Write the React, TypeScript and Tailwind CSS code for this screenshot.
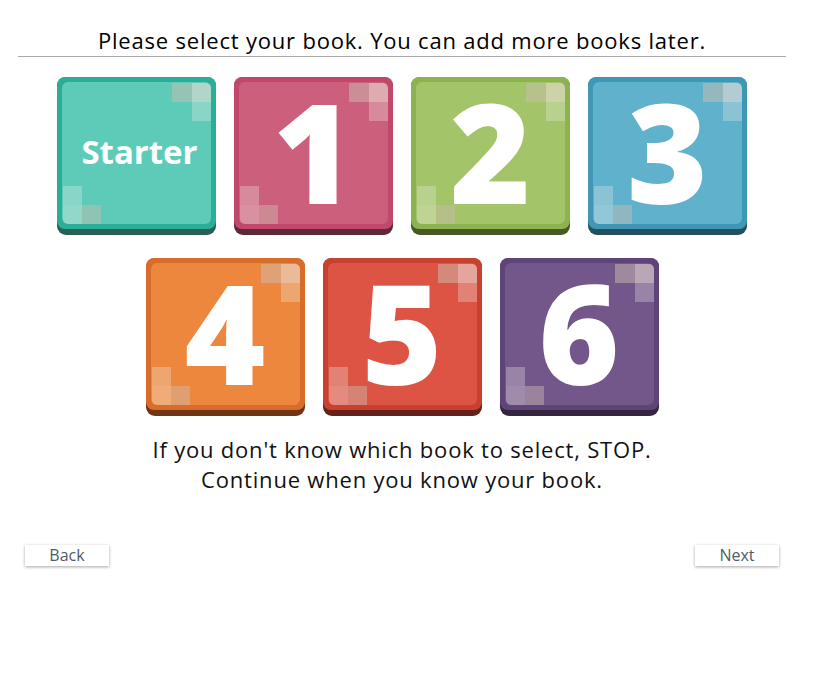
const font = { fontFamily: '"Open Sans", "Noto Sans", sans-serif' };

type Book = {
  label: string;
  edge: string;
  face: string;
  base: string;
};

const row1: Book[] = [
  { label: "Starter", edge: "bg-[#2aae98]", face: "bg-[#5ecbb9]", base: "bg-[#2b5f56]" },
  { label: "1", edge: "bg-[#c1486a]", face: "bg-[#cc5f7c]", base: "bg-[#5b2a3a]" },
  { label: "2", edge: "bg-[#8db350]", face: "bg-[#a3c468]", base: "bg-[#475a26]" },
  { label: "3", edge: "bg-[#3f97b6]", face: "bg-[#5fb1cc]", base: "bg-[#234f5f]" },
];

const row2: Book[] = [
  { label: "4", edge: "bg-[#d86c2a]", face: "bg-[#ee873e]", base: "bg-[#6f3514]" },
  { label: "5", edge: "bg-[#c8412e]", face: "bg-[#dd5445]", base: "bg-[#66221a]" },
  { label: "6", edge: "bg-[#5e4478]", face: "bg-[#73568a]", base: "bg-[#36253f]" },
];

function Tile({ book }: { book: Book }) {
  const starter = book.label === "Starter";
  return (
    <button className={`w-[159px] h-[158px] rounded-[9px] pb-[6px] ${book.base}`}>
      <div className={`h-full rounded-[8px] p-[5px] ${book.edge}`}>
        <div className={`relative h-full rounded-[6px] ${book.face} flex items-center justify-center`}>
          {/* corner pixel decorations */}
          <span className="absolute top-[1px] right-[19px] w-[20px] h-[19px] bg-[rgba(204,189,175,0.5)]" />
          <span className="absolute top-[1px] right-0 w-[19px] h-[19px] rounded-tr-[5px] bg-[rgba(234,221,212,0.6)]" />
          <span className="absolute top-[20px] right-0 w-[19px] h-[19px] bg-[rgba(240,240,232,0.3)]" />
          <span className="absolute bottom-[19px] left-[1px] w-[19px] h-[19px] bg-[rgba(240,240,232,0.3)]" />
          <span className="absolute bottom-0 left-[1px] w-[19px] h-[19px] rounded-bl-[5px] bg-[rgba(240,240,232,0.35)]" />
          <span className="absolute bottom-0 left-[20px] w-[19px] h-[19px] bg-[rgba(204,189,175,0.45)]" />
          {starter ? (
            <span className="relative -mt-[2px] ml-[6px] text-white font-bold text-[33px] leading-[40px]" style={font}>
              Starter
            </span>
          ) : (
            <span className="relative -mt-[6px] text-white font-extrabold text-[138px] leading-[130px]" style={font}>
              {book.label}
            </span>
          )}
        </div>
      </div>
    </button>
  );
}

export default function App() {
  return (
    <main className="w-[804px] bg-white px-[18px] min-h-[685px]" style={font}>
      <h1 className="pt-[27px] pb-[3px] border-b border-[#aaaaaa] text-center text-[22px] leading-[26px] tracking-[0.8px] text-black">
        Please select your book. You can add more books later.
      </h1>

      <div className="flex justify-center gap-[18px] mt-[20px]">
        {row1.map((b) => (
          <Tile key={b.label} book={b} />
        ))}
      </div>
      <div className="flex justify-center gap-[18px] mt-[23px]">
        {row2.map((b) => (
          <Tile key={b.label} book={b} />
        ))}
      </div>

      <p className="mt-[18px] text-center text-[22px] leading-[30px] tracking-[0.8px] text-[#111]">
        If you don't know which book to select, STOP.
        <br />
        Continue when you know your book.
      </p>

      <div className="flex justify-between mt-[51px] px-[7px]">
        <button className="w-[84px] h-[21px] bg-white text-[16px] leading-[21px] text-[#4d5b6a] shadow-[0_1px_3px_rgba(0,0,0,0.35)]">
          Back
        </button>
        <button className="w-[84px] h-[21px] bg-white text-[16px] leading-[21px] text-[#4d5b6a] shadow-[0_1px_3px_rgba(0,0,0,0.35)]">
          Next
        </button>
      </div>
    </main>
  );
}
